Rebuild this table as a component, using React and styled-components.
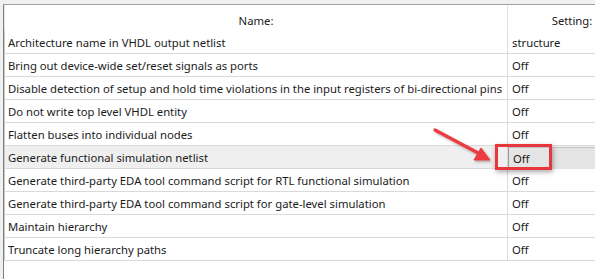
import styled, { createGlobalStyle } from 'styled-components';

const settings = [
  { name: 'Architecture name in VHDL output netlist', value: 'structure' },
  { name: 'Bring out device-wide set/reset signals as ports', value: 'Off' },
  {
    name: 'Disable detection of setup and hold time violations in the input registers of bi-directional pins',
    value: 'Off',
  },
  { name: 'Do not write top level VHDL entity', value: 'Off' },
  { name: 'Flatten buses into individual nodes', value: 'Off' },
  { name: 'Generate functional simulation netlist', value: 'Off', selected: true },
  { name: 'Generate third-party EDA tool command script for RTL functional simulation', value: 'Off' },
  { name: 'Generate third-party EDA tool command script for gate-level simulation', value: 'Off' },
  { name: 'Maintain hierarchy', value: 'Off' },
  { name: 'Truncate long hierarchy paths', value: 'Off' },
];

const GlobalStyle = createGlobalStyle`
  html, body {
    margin: 0;
    padding: 0;
    background: #f0f0f0;
    overflow: hidden;
  }
  body {
    font-family: 'Noto Sans', 'Open Sans', sans-serif;
  }
`;

const Frame = styled.div`
  position: relative;
  width: 595px;
  height: 279px;
  box-sizing: border-box;
  padding: 4px 0 0 3px;
  background: #f0f0f0;
`;

const Panel = styled.div`
  height: 100%;
  box-sizing: border-box;
  background: #fff;
  border-top: 1px solid #a0a0a0;
  border-left: 1px solid #7f7f7f;
  overflow: hidden;
`;

const Grid = styled.div`
  display: grid;
  grid-template-columns: 504px 128px;
  width: 632px;
`;

const HeadCell = styled.div`
  height: 26px;
  display: flex;
  align-items: center;
  justify-content: center;
  font-size: 11.3px;
  color: #1b1b1b;
  border-left: ${(p) => (p.first ? '1px solid #e2e2e2' : 'none')};
  border-right: ${(p) => (p.first ? '1px solid #e2e2e2' : 'none')};
  padding-top: 4px;
  box-sizing: border-box;
`;

const Cell = styled.div`
  height: 23px;
  box-sizing: border-box;
  display: flex;
  align-items: center;
  font-size: 11.3px;
  color: #1b1b1b;
  white-space: nowrap;
  padding-top: 1px;
  border-bottom: 1px solid #d9d9d9;
  background: ${(p) => (p.selected ? '#efefef' : '#fff')};
`;

const NameCell = styled(Cell)`
  padding-left: 3px;
  border-left: 1px solid #c8c8c8;
  border-right: 1px solid #dadada;
`;

const ValueCell = styled(Cell)`
  padding-left: 4px;
`;

const Editor = styled.div`
  height: 22px;
  width: 100%;
  box-sizing: border-box;
  display: flex;
  align-items: center;
  padding-left: 4px;
  margin-left: -4px;
  background: #e4e4e4;
  border-left: 1px solid #9a9a9a;
  border-top: 1px solid #c4c4c4;
`;

const Callout = styled.div`
  position: absolute;
  left: 495px;
  top: 144px;
  width: 57px;
  height: 26px;
  box-sizing: border-box;
  border: 3px solid #e8363d;
  box-shadow: 1px 2px 5px rgba(0, 0, 0, 0.35);
  pointer-events: none;
`;

const Arrow = styled.svg`
  position: absolute;
  left: 0;
  top: 0;
  pointer-events: none;
`;

export default function App() {
  return (
    <>
      <GlobalStyle />
      <Frame>
        <Panel>
          <Grid>
            <HeadCell first>Name:</HeadCell>
            <HeadCell>Setting:</HeadCell>
            {settings.map((s) => (
              <Row key={s.name} item={s} />
            ))}
          </Grid>
        </Panel>
        <Arrow width="595" height="279" viewBox="0 0 595 279">
          <defs>
            <filter id="soft" x="-20%" y="-20%" width="140%" height="140%">
              <feDropShadow dx="1" dy="1.5" stdDeviation="1.2" floodOpacity="0.3" />
            </filter>
          </defs>
          <g filter="url(#soft)" fill="#ec3a3f" stroke="#ec3a3f">
            <line x1="435" y1="130" x2="480" y2="154" strokeWidth="3.2" strokeLinecap="round" />
            <polygon points="490,160 474,160 481,148" strokeWidth="1" strokeLinejoin="round" />
          </g>
        </Arrow>
        <Callout />
      </Frame>
    </>
  );
}

function Row({ item }) {
  return (
    <>
      <NameCell selected={item.selected}>{item.name}</NameCell>
      <ValueCell selected={item.selected}>
        {item.selected ? <Editor>{item.value}</Editor> : item.value}
      </ValueCell>
    </>
  );
}
